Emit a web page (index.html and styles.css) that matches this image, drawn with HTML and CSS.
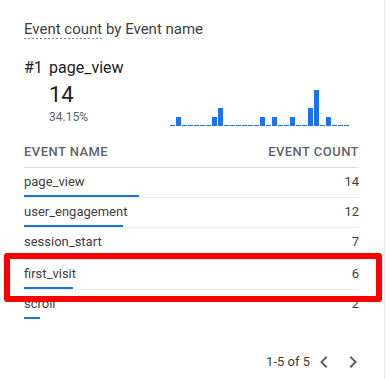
FILE: index.html
```html
<!DOCTYPE html>
<html>
<head>
<meta charset="utf-8">
<link rel="stylesheet" href="styles.css">
</head>
<body>
<div class="card">
  <div class="title"><span class="dim dim-strong">Event count</span> by <span class="dim dim-light">Event name</span></div>
  <div class="rank"><span class="rank-num">#1</span><span>page_view</span></div>
  <div class="summary">
    <div class="stat">
      <div class="big">14</div>
      <div class="pct">34.15%</div>
    </div>
    <div class="chart">
      <span class="bar zero"></span>
      <span class="bar" style="height:9px"></span>
      <span class="bar zero"></span>
      <span class="bar zero"></span>
      <span class="bar zero"></span>
      <span class="bar zero"></span>
      <span class="bar zero"></span>
      <span class="bar" style="height:9px"></span>
      <span class="bar" style="height:18px"></span>
      <span class="bar zero"></span>
      <span class="bar zero"></span>
      <span class="bar zero"></span>
      <span class="bar zero"></span>
      <span class="bar zero"></span>
      <span class="bar zero"></span>
      <span class="bar" style="height:9px"></span>
      <span class="bar zero"></span>
      <span class="bar" style="height:9px"></span>
      <span class="bar zero"></span>
      <span class="bar zero"></span>
      <span class="bar" style="height:9px"></span>
      <span class="bar zero"></span>
      <span class="bar zero"></span>
      <span class="bar" style="height:18px"></span>
      <span class="bar" style="height:36px"></span>
      <span class="bar zero"></span>
      <span class="bar" style="height:9px"></span>
      <span class="bar zero"></span>
      <span class="bar zero"></span>
      <span class="bar zero"></span>
    </div>
  </div>
  <div class="thead">
    <span>Event name</span>
    <span>Event count</span>
  </div>
  <div class="row">
    <div class="cell-name"><span class="name">page_view</span><span class="meter" style="width:115px"></span></div>
    <span class="val">14</span>
  </div>
  <div class="row">
    <div class="cell-name"><span class="name">user_engagement</span><span class="meter" style="width:98.6px"></span></div>
    <span class="val">12</span>
  </div>
  <div class="row row-tall">
    <div class="cell-name"><span class="name">session_start</span><span class="meter" style="width:57.5px"></span></div>
    <span class="val">7</span>
  </div>
  <div class="row">
    <div class="cell-name"><span class="name">first_visit</span><span class="meter" style="width:49.3px"></span></div>
    <span class="val">6</span>
  </div>
  <div class="row last">
    <div class="cell-name"><span class="name">scroll</span><span class="meter" style="width:16.4px"></span></div>
    <span class="val">2</span>
  </div>
  <div class="pager">
    <span class="range">1-5 of 5</span>
    <svg class="chev" width="24" height="24" viewBox="0 0 24 24"><path d="M15.41 7.41L14 6l-6 6 6 6 1.41-1.41L10.83 12z"/></svg>
    <svg class="chev" width="24" height="24" viewBox="0 0 24 24"><path d="M10 6L8.59 7.41 13.17 12l-4.58 4.59L10 18l6-6z"/></svg>
  </div>
  <div class="highlight"></div>
</div>
</body>
</html>
```

FILE: styles.css
```css
* { box-sizing: border-box; }
html, body { margin: 0; padding: 0; background: #fff; }
body { font-family: Roboto, "Liberation Sans", sans-serif; color: #3c4043; }

.card {
  position: relative;
  width: 385px;
  height: 379px;
  border-right: 1px solid #e3e3e3;
  padding: 19px 25px 5px 24px;
  display: flex;
  flex-direction: column;
}

.title {
  font-size: 15px;
  line-height: 20px;
  color: #3c4043;
  white-space: nowrap;
}
.dim {
  display: inline-block;
  background-repeat: repeat-x;
  background-position: left bottom;
  background-size: 4px 1px;
}
.dim-strong { background-image: linear-gradient(to right, #80868b 0 2px, transparent 2px 4px); }
.dim-light { background-image: linear-gradient(to right, #dadce0 0 2px, transparent 2px 4px); }

.rank {
  margin-top: 19px;
  font-size: 16px;
  line-height: 20px;
  color: #202124;
  display: flex;
}
.rank-num { width: 25px; }

.summary {
  margin-top: 4px;
  padding-left: 25px;
  display: flex;
  justify-content: space-between;
  align-items: flex-end;
}
.big {
  font-size: 22px;
  line-height: 26px;
  color: #202124;
}
.pct {
  font-size: 12px;
  line-height: 18px;
  color: #5f6368;
}
.chart {
  display: flex;
  align-items: flex-end;
  gap: 1px;
  margin-right: 10px;
  height: 40px;
}
.bar {
  width: 5px;
  background: #1a73e8;
}
.bar.zero { height: 1px; }

.thead {
  margin-top: 18px;
  display: flex;
  justify-content: space-between;
  font-size: 13px;
  line-height: 16px;
  font-weight: 500;
  letter-spacing: 0.45px;
  text-transform: uppercase;
  color: #5f6368;
  padding-bottom: 7px;
  border-bottom: 1px solid #dadce0;
}

.row {
  display: flex;
  justify-content: space-between;
  align-items: flex-start;
  padding-top: 4px;
  height: 30px;
  border-bottom: 1px solid #e8eaed;
  font-size: 13px;
  line-height: 20px;
}
.row.row-tall { height: 32px; }
.row.last { border-bottom: none; }
.cell-name { display: flex; flex-direction: column; }
.name { color: #3c4043; }
.meter {
  display: block;
  height: 2px;
  margin-top: 3px;
  background: #1a73e8;
}
.val { color: #3c4043; }

.pager {
  margin-top: auto;
  margin-right: -6px;
  display: flex;
  justify-content: flex-end;
  align-items: center;
  gap: 5px;
  font-size: 13px;
  line-height: 24px;
  color: #3c4043;
}
.range { margin-right: -3px; }
.chev { fill: #5f6368; display: block; }

.highlight {
  position: absolute;
  left: 4px;
  top: 253px;
  width: 378px;
  height: 49px;
  border: 6px solid #ff0000;
  border-radius: 3px;
}
```
